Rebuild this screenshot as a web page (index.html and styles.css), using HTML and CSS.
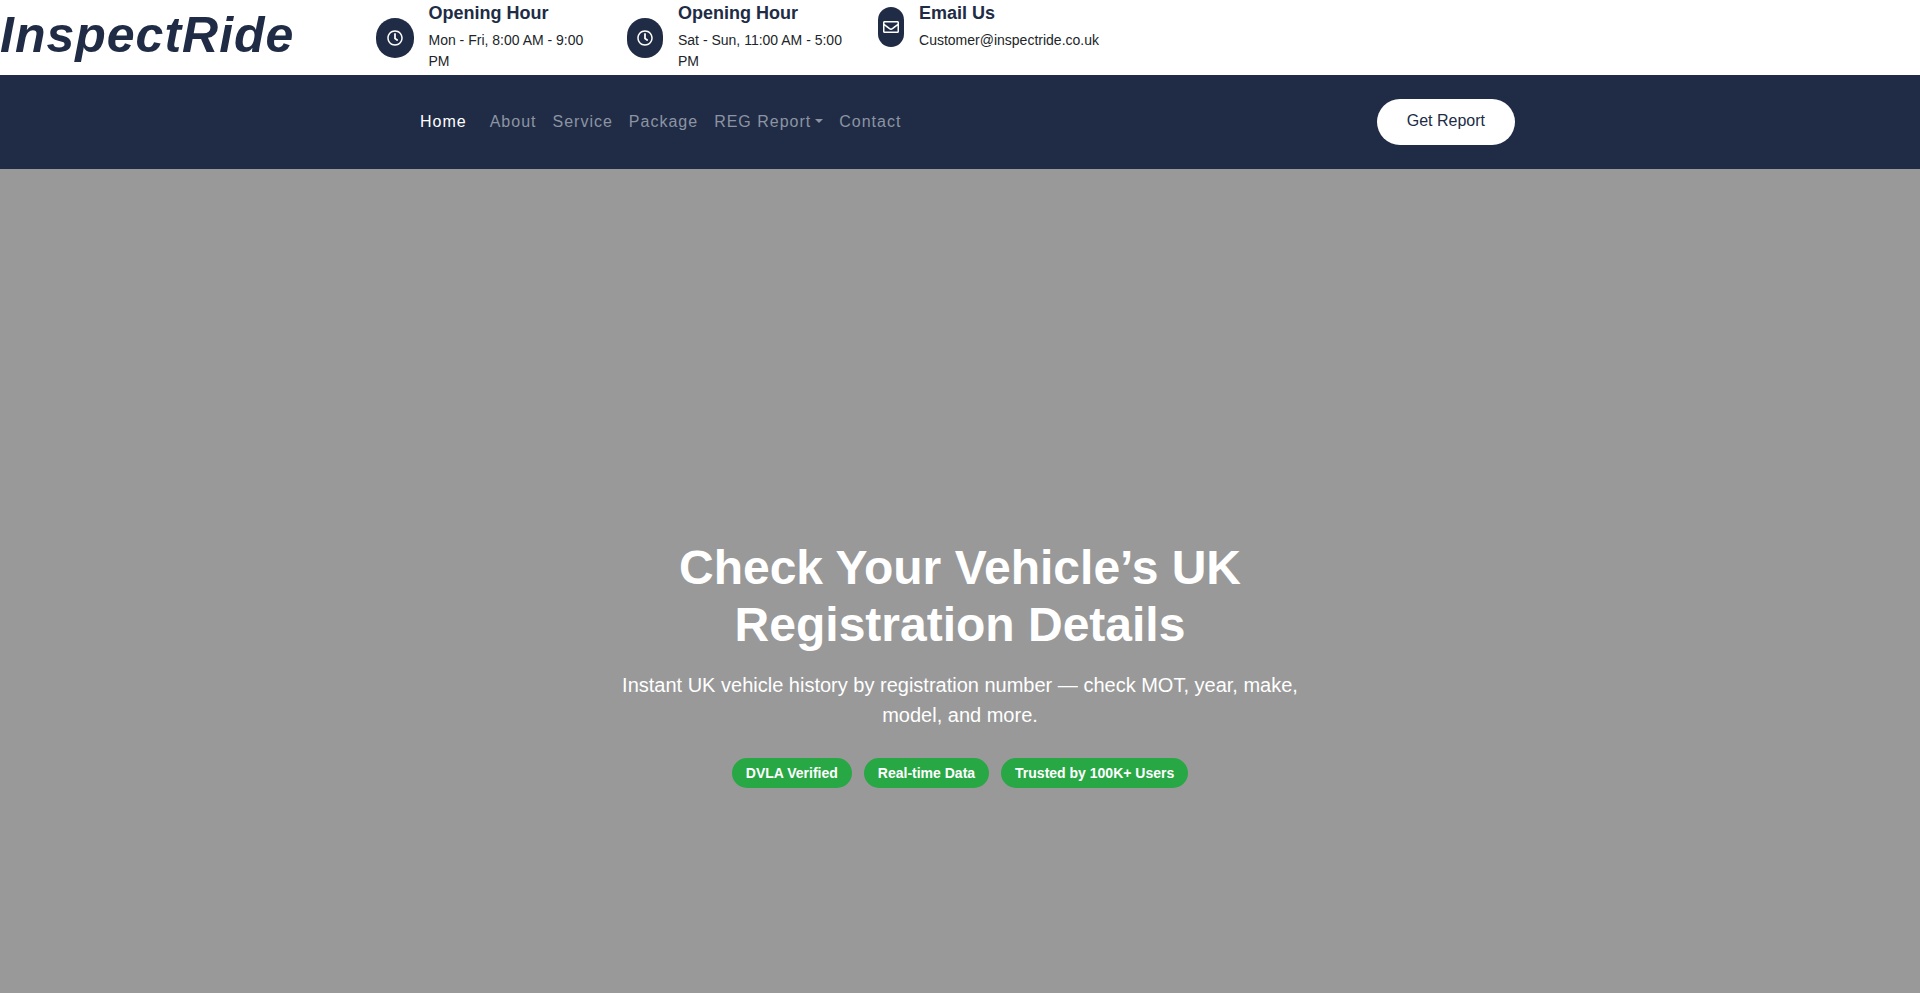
FILE: index.html
```html
<!DOCTYPE html>
<html lang="en">
<head>
<meta charset="utf-8">
<meta name="viewport" content="width=device-width, initial-scale=1">
<title>InspectRide</title>
<link rel="stylesheet" href="styles.css">
</head>
<body>
<svg class="sprite" aria-hidden="true">
  <symbol id="clock" viewBox="0 0 512 512"><path d="M256 8C119 8 8 119 8 256s111 248 248 248 248-111 248-248S393 8 256 8zm0 448c-110.500 0-200-89.500-200-200S145.500 56 256 56s200 89.500 200 200-89.500 200-200 200zm61.800-104.400l-84.900-61.700c-3.100-2.300-4.900-5.900-4.900-9.700V116c0-6.600 5.400-12 12-12h32c6.600 0 12 5.400 12 12v141.700l66.800 48.600c5.400 3.900 6.500 11.400 2.600 16.800L334.600 349c-3.900 5.300-11.400 6.500-16.800 2.600z"/></symbol>
  <symbol id="envelope" viewBox="0 0 512 512"><path d="M464 64H48C21.490 64 0 85.490 0 112v288c0 26.510 21.490 48 48 48h416c26.510 0 48-21.490 48-48V112c0-26.510-21.490-48-48-48zm0 48v40.805c-22.422 18.259-58.168 46.651-134.587 106.490-16.841 13.247-50.201 45.072-73.413 44.701-23.208.375-56.579-31.459-73.413-44.701C106.180 199.465 70.425 171.067 48 152.805V112h416zM48 400V214.398c22.914 18.251 55.409 43.862 104.938 82.646 21.857 17.205 60.134 55.186 103.062 54.955 42.717.231 80.509-37.199 103.053-54.947 49.528-38.783 82.032-64.401 104.947-82.653V400H48z"/></symbol>
</svg>
<header class="top-bar">
  <a class="logo" href="#">InspectRide</a>
  <div class="info">
    <div class="info-icon"><svg aria-hidden="true"><use href="#clock"/></svg></div>
    <div class="info-text"><h2>Opening Hour</h2><p>Mon - Fri, 8:00 AM - 9:00 PM</p></div>
  </div>
  <div class="info">
    <div class="info-icon"><svg aria-hidden="true"><use href="#clock"/></svg></div>
    <div class="info-text"><h2>Opening Hour</h2><p>Sat - Sun, 11:00 AM - 5:00 PM</p></div>
  </div>
  <div class="info">
    <div class="info-icon"><svg aria-hidden="true"><use href="#envelope"/></svg></div>
    <div class="info-text"><h2>Email Us</h2><p>Customer@inspectride.co.uk</p></div>
  </div>
</header>
<nav class="nav-bar">
  <div class="container">
    <div class="nav-links">
      <a class="nav-link active" href="#">Home</a>
      <a class="nav-link" href="#">About</a>
      <a class="nav-link" href="#">Service</a>
      <a class="nav-link" href="#">Package</a>
      <a class="nav-link dropdown" href="#" aria-haspopup="true">REG Report</a>
      <a class="nav-link" href="#">Contact</a>
    </div>
    <a class="report-button" href="#">Get Report</a>
  </div>
</nav>
<main class="hero">
  <div class="hero-content">
    <h1>Check Your Vehicle’s UK Registration Details</h1>
    <p>Instant UK vehicle history by registration number — check MOT, year, make, model, and more.</p>
    <div class="badges">
      <span class="badge">DVLA Verified</span>
      <span class="badge">Real-time Data</span>
      <span class="badge">Trusted by 100K+ Users</span>
    </div>
  </div>
</main>
</body>
</html>
```

FILE: styles.css
```css
* {
  box-sizing: border-box;
}

body {
  margin: 0;
  min-height: 100vh;
  display: flex;
  flex-direction: column;
  font-family: "Liberation Sans", Arial, sans-serif;
  font-size: 16px;
  line-height: 24px;
  color: #212529;
  background: #fff;
}

h1, h2, p {
  margin: 0;
}

a {
  text-decoration: none;
}

.sprite {
  display: none;
}

.top-bar {
  display: flex;
  flex-wrap: wrap;
  align-items: flex-start;
  column-gap: 30px;
}

.logo {
  flex: 0 0 346px;
  font-size: 50px;
  line-height: 70px;
  font-weight: 700;
  font-style: italic;
  letter-spacing: 1px;
  color: #202c45;
}

.info {
  flex: 0 0 221px;
  min-width: 0;
  display: flex;
  align-items: center;
}

.info-icon {
  width: 40px;
  height: 40px;
  margin-right: 15px;
  display: flex;
  align-items: center;
  justify-content: center;
  border-radius: 20px;
  background: #202c45;
}

.info-icon svg {
  flex: none;
  width: 16px;
  height: 16px;
  fill: #fff;
}

.info-text {
  padding-bottom: 3px;
}

.info-text h2 {
  margin-bottom: 3px;
  font-size: 18px;
  line-height: 27px;
  color: #202c45;
}

.info-text p {
  font-size: 14px;
  line-height: 21px;
}

.nav-bar {
  padding: 24px 0;
  background: #202c45;
}

.container {
  max-width: 1140px;
  margin: 0 auto;
  padding: 0 15px;
  display: flex;
  align-items: center;
  justify-content: space-between;
}

.nav-links {
  display: flex;
  flex-wrap: wrap;
  padding-left: 7px;
}

.nav-link {
  padding: 8px;
  letter-spacing: 1px;
  color: #8c94a3;
}

.nav-link.active {
  margin-right: 7px;
  color: #fff;
}

.dropdown::after {
  content: "";
  display: inline-block;
  margin-left: 4px;
  vertical-align: 4px;
  border-top: 4px solid;
  border-left: 4px solid transparent;
  border-right: 4px solid transparent;
}

.report-button {
  padding: 10px 30px 12px;
  border-radius: 23px;
  background: #fff;
  color: #202c45;
}

.hero {
  flex: 1;
  padding: 370px 15px 120px;
  display: flex;
  justify-content: center;
  align-items: flex-start;
  background: #999;
  color: #fff;
  text-align: center;
}

.hero-content {
  max-width: 700px;
}

.hero h1 {
  margin-bottom: 17px;
  font-size: 48px;
  line-height: 57px;
}

.hero p {
  margin-bottom: 28px;
  font-size: 20px;
  line-height: 30px;
}

.badges {
  display: flex;
  flex-wrap: wrap;
  justify-content: center;
  gap: 12px;
}

.badge {
  padding: 3px 14px;
  border-radius: 15px;
  background: #28a745;
  font-size: 14px;
  font-weight: 700;
}
```
